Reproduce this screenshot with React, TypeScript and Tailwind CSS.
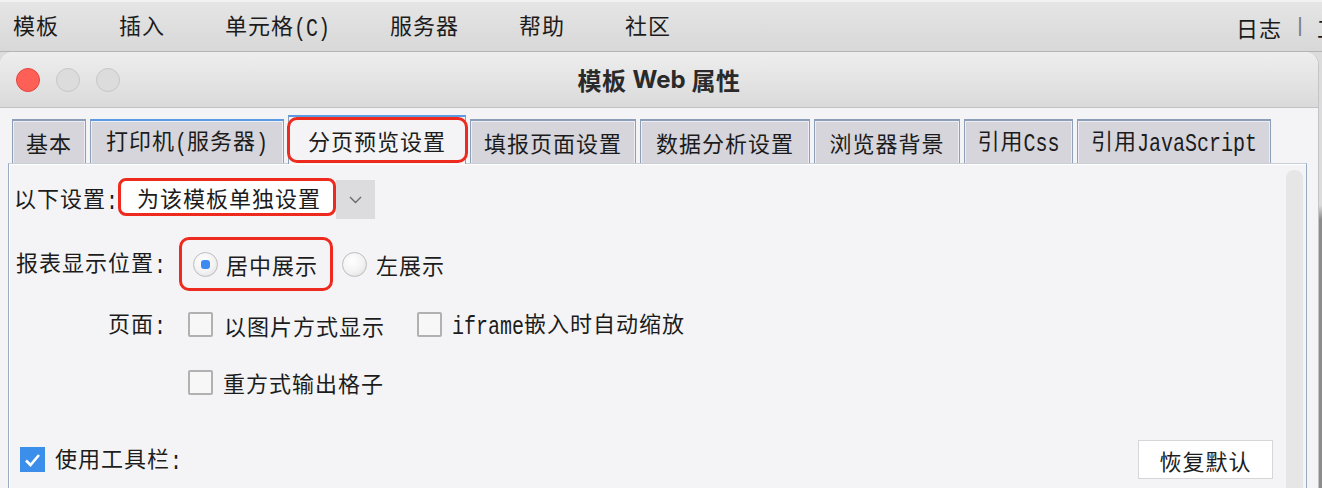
import React from "react"

const MENUS = ["模板", "插入", "单元格(C)", "服务器", "帮助", "社区"]

interface TabDef {
    label: string
    w: number
    hover?: boolean
    active?: boolean
}

const TABS: TabDef[] = [
    { label: "基本", w: 74 },
    { label: "打印机(服务器)", w: 194, hover: true },
    { label: "分页预览设置", w: 178, active: true },
    { label: "填报页面设置", w: 166 },
    { label: "数据分析设置", w: 170 },
    { label: "浏览器背景", w: 146 },
    { label: "引用Css", w: 109 },
    { label: "引用JavaScript", w: 194 },
]

// latin runs get the half-width mono face (stretched a bit to match the tall glyphs), CJK keeps the sans face
function Txt({ s }: { s: string }) {
    const parts = s.split(/([\x00-\x7F]+)/)
    return (
        <span className="whitespace-nowrap">
            {parts.map((p, i) =>
                !p ? null : /^[\x00-\x7F]+$/.test(p) ? (
                    <span
                        key={i}
                        className="inline-block origin-bottom scale-y-[1.25] align-[-3px] font-['Liberation_Mono',monospace] text-[20px] leading-[22px] tracking-normal"
                    >
                        {p}
                    </span>
                ) : (
                    <span key={i}>{p}</span>
                )
            )}
        </span>
    )
}

function Radio({ checked }: { checked?: boolean }) {
    return (
        <span className="flex h-[25px] w-[25px] shrink-0 items-center justify-center rounded-full border border-[#bdbdbd] bg-[radial-gradient(circle_at_40%_35%,#ffffff_0%,#f2f2f2_55%,#d9d9d9_100%)]">
            {checked && <span className="h-[9px] w-[9px] rounded-[3px] bg-[#3d8af0]" />}
        </span>
    )
}

function Check({ checked }: { checked?: boolean }) {
    if (checked) {
        return (
            <span className="flex h-[25px] w-[25px] shrink-0 items-center justify-center bg-[#3b8eea]">
                <svg width="17" height="14" viewBox="0 0 17 14">
                    <path d="M2 7.5 L6.5 12 L15 2" fill="none" stroke="#fff" strokeWidth="2.6" />
                </svg>
            </span>
        )
    }
    return <span className="block h-[25px] w-[25px] shrink-0 rounded-[2px] border-2 border-[#b1b1b1] bg-[#f7f7f8]" />
}

function Tab({ t }: { t: TabDef }) {
    if (t.active) {
        return (
            <div
                style={{ width: t.w }}
                className="relative z-10 -mb-[1px] flex h-[49px] shrink-0 items-center justify-center border-x border-t-2 border-x-[#8c9eb8] border-t-[#5a9be4] bg-[#f4f4f6]"
            >
                <span className="mt-[-2px]">
                    <Txt s={t.label} />
                </span>
                <span className="pointer-events-none absolute -left-[2px] -right-[3px] top-[0px] bottom-[1px] rounded-[10px] border-[3px] border-[#ee2a1f]" />
            </div>
        )
    }
    return (
        <div
            style={{ width: t.w }}
            className={
                "flex h-[44px] shrink-0 items-center justify-center border-x border-[#8c9eb8] bg-[#d6d5db] shadow-[inset_1px_1px_0_#eceef3,inset_-1px_0_0_#eceef3] " +
                (t.hover ? "border-t-2 border-t-[#5a9be4]" : "border-t-2 border-t-[#8c9eb8]")
            }
        >
            <Txt s={t.label} />
        </div>
    )
}

export default function App() {
    return (
        <div className="h-[488px] w-[1322px] overflow-hidden bg-[linear-gradient(180deg,#dcdcdc_0%,#dcdcdc_42%,#8c8c8c_45%,#8c8c8c_100%)] font-['Noto_Sans_CJK_SC',sans-serif] text-[22px] leading-[26px] tracking-[1px] text-[#1c1c1c]">
            {/* Menu bar */}
            <div className="flex h-[52px] items-center border-b border-t-2 border-b-[#b4b4b4] border-t-[#f2f2f2] bg-[linear-gradient(180deg,#e5e5e5,#d8d8d8)] pl-[13px]">
                <div className="flex gap-[60px]">
                    {MENUS.map((m) => (
                        <Txt key={m} s={m} />
                    ))}
                </div>
                <div className="ml-auto flex w-[86px] shrink-0 items-center overflow-hidden whitespace-nowrap">
                    <span>日志</span>
                    <span className="ml-[12px] font-['Liberation_Mono',monospace] text-[20px] text-[#777]">|</span>
                    <span className="ml-[10px]">工具</span>
                </div>
            </div>

            {/* Window */}
            <div className="h-[436px] w-[1319px] overflow-hidden rounded-t-[13px] border-r border-[#c4c4c8] bg-[#f4f4f6]">
                {/* Title bar */}
                <div className="grid h-[56px] grid-cols-[1fr_auto_1fr] items-center border-b border-[#c2c2c2] bg-[linear-gradient(180deg,#eeeeee,#dadada)]">
                    <div className="flex gap-[16px] pl-[16px] pt-[1px]">
                        <span className="h-[24px] w-[24px] rounded-full border border-[#e2463f] bg-[#fe5f57]" />
                        <span className="h-[24px] w-[24px] rounded-full border border-[#c6c6c6] bg-[#dcdcdc]" />
                        <span className="h-[24px] w-[24px] rounded-full border border-[#c6c6c6] bg-[#dcdcdc]" />
                    </div>
                    <div className="flex items-center gap-[6px] text-[24px] font-bold tracking-[0.5px] text-[#2a2a2a]">
                        <span>模板</span>
                        <span className="font-['Inter',sans-serif] tracking-normal">Web</span>
                        <span>属性</span>
                    </div>
                    <div />
                </div>

                {/* Body */}
                <div className="pt-[7px]">
                    <div className="ml-[12px] flex items-end gap-[4px]">
                        {TABS.map((t) => (
                            <Tab key={t.label} t={t} />
                        ))}
                    </div>

                    <div className="ml-[8px] flex h-[340px] w-[1299px] border-x border-t border-x-[#9aabc2] border-t-[#c9cdd6] shadow-[inset_1px_1px_0_#ffffff]">
                        <div className="flex-1 pl-[5px] pr-[13px] pt-[16px]">
                            {/* Row 1 */}
                            <div className="flex h-[39px] items-center">
                                <span className="shrink-0">
                                    <Txt s="以下设置:" />
                                </span>
                                <div className="flex h-[39px] items-start">
                                    <div className="-mt-[2px] flex h-[38px] w-[218px] items-center whitespace-nowrap rounded-[8px] border-[3px] border-[#ee2a1f] bg-white pl-[16px]">
                                        为该模板单独设置
                                    </div>
                                    <div className="flex h-[39px] w-[39px] items-center justify-center bg-[#dcdcde]">
                                        <svg width="13" height="8" viewBox="0 0 13 8">
                                            <polyline points="1,1 6.5,6.5 12,1" fill="none" stroke="#6a6a6a" strokeWidth="1.4" />
                                        </svg>
                                    </div>
                                </div>
                            </div>

                            {/* Row 2 */}
                            <div className="mt-[18px] flex h-[54px] items-center">
                                <span className="w-[152px] shrink-0 text-right">
                                    <Txt s="报表显示位置:" />
                                </span>
                                <div className="ml-[13px] flex h-[54px] items-center gap-[8px] rounded-[10px] border-[3px] border-[#ee2a1f] pl-[11px] pr-[12px]">
                                    <Radio checked />
                                    <span>居中展示</span>
                                </div>
                                <div className="ml-[9px] flex items-center gap-[9px]">
                                    <Radio />
                                    <span>左展示</span>
                                </div>
                            </div>

                            {/* Row 3 */}
                            <div className="mt-[21px] flex h-[25px] items-center whitespace-nowrap">
                                <span className="w-[152px] shrink-0 text-right">
                                    <Txt s="页面:" />
                                </span>
                                <span className="ml-[22px]">
                                    <Check />
                                </span>
                                <span className="ml-[11px]">以图片方式显示</span>
                                <span className="ml-[32px]">
                                    <Check />
                                </span>
                                <span className="ml-[10px]">
                                    <Txt s="iframe嵌入时自动缩放" />
                                </span>
                            </div>

                            {/* Row 4 */}
                            <div className="mt-[32px] flex h-[26px] items-center pl-[174px]">
                                <Check />
                                <span className="ml-[10px]">重方式输出格子</span>
                            </div>

                            {/* Row 5 */}
                            <div className="mt-[45px] flex h-[39px] items-center">
                                <span className="ml-[6px]">
                                    <Check checked />
                                </span>
                                <span className="ml-[10px]">
                                    <Txt s="使用工具栏:" />
                                </span>
                                <button className="ml-auto flex h-[39px] w-[135px] items-center justify-center border border-[#d6d6d8] bg-white">
                                    恢复默认
                                </button>
                            </div>
                        </div>

                        {/* Scrollbar */}
                        <div className="mr-[3px] mt-[6px] w-[17px] shrink-0 rounded-t-[8px] bg-[#e6e6e7]" />
                    </div>
                </div>
            </div>
        </div>
    )
}
